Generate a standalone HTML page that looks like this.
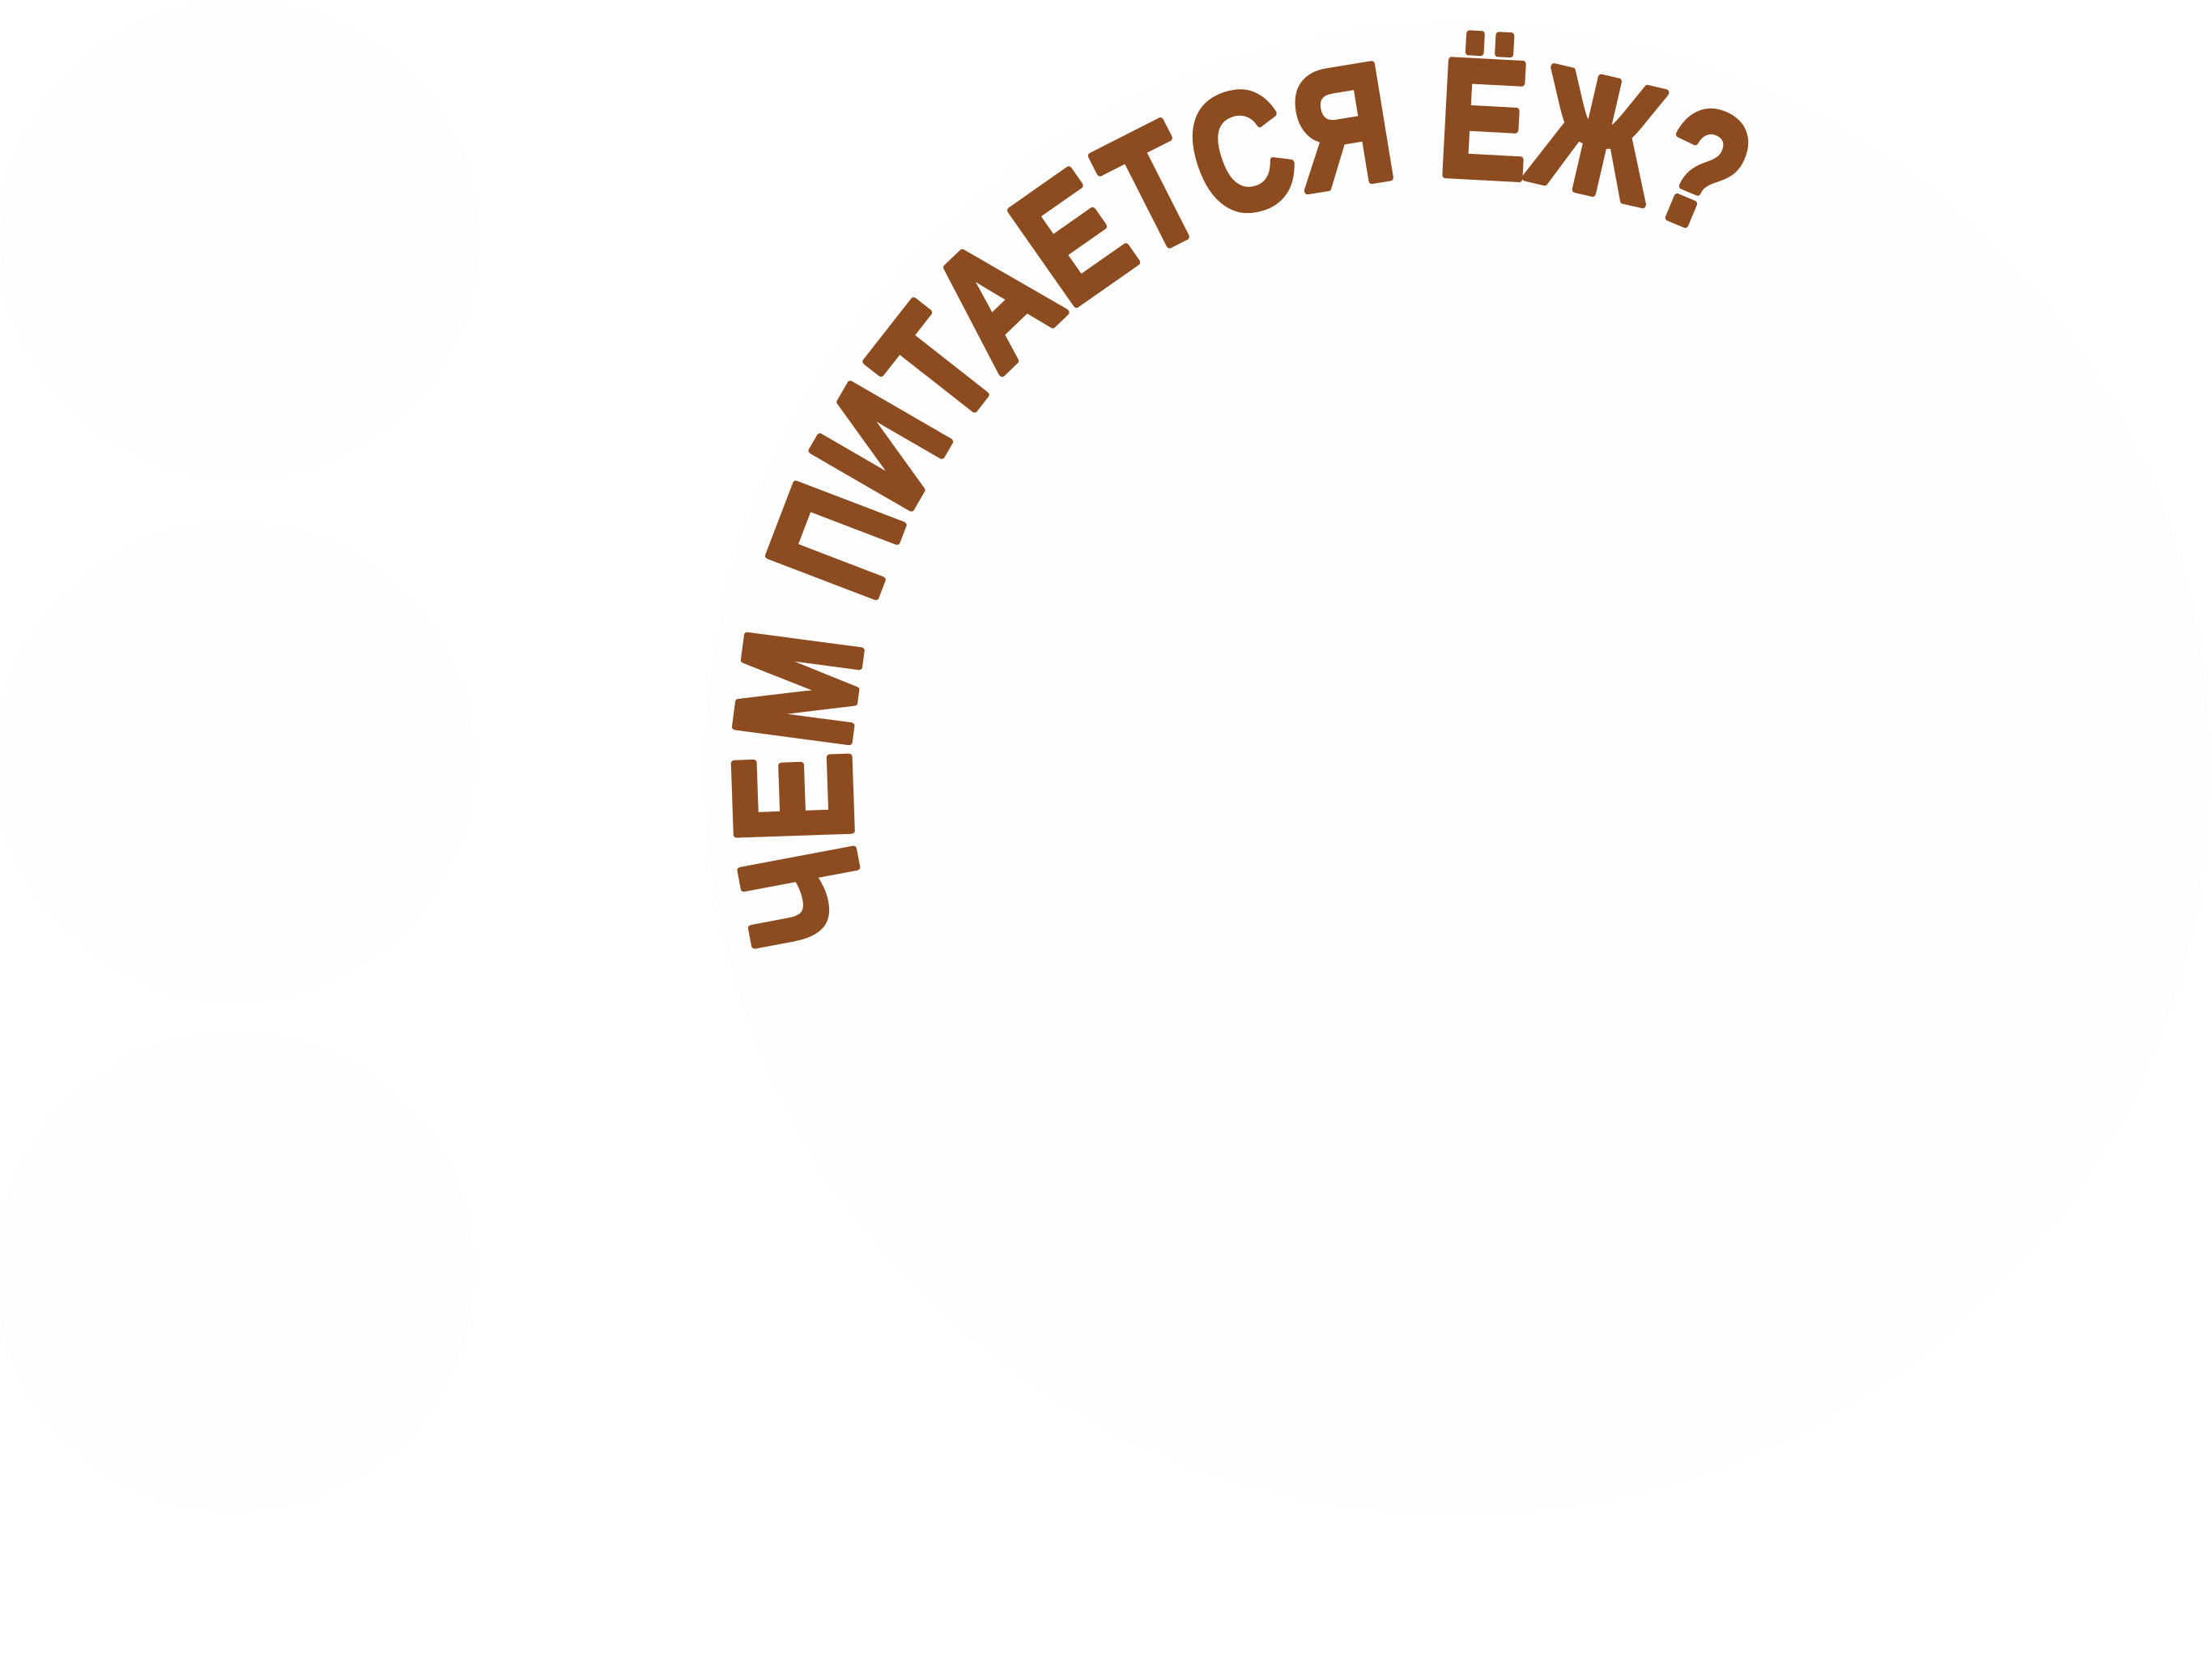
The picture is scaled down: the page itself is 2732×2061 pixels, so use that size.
<!DOCTYPE html>
<html><head><meta charset="utf-8"><style>
html,body{margin:0;padding:0;background:#fff;}
svg{display:block}
</style></head><body>
<svg width="2732" height="2061" viewBox="0 0 2732 2061" xmlns="http://www.w3.org/2000/svg">
<rect width="2732" height="2061" fill="#ffffff"/>
<circle cx="296" cy="296" r="296" fill="#fdfdfd"/>
<circle cx="290" cy="940" r="296" fill="#fdfdfd"/>
<circle cx="290" cy="1570" r="296" fill="#fdfdfd"/>
<ellipse cx="1800" cy="950" rx="930" ry="920" fill="#fdfdfd"/>
<defs>
<path id="arc" d="M 1075 1150 A 740 740 0 0 1 2110 290"/>
</defs>
<text font-family="'Liberation Sans',sans-serif" font-weight="bold" font-size="205" fill="#8d4b20" stroke="#8d4b20" stroke-width="9" stroke-linejoin="round">
<textPath href="#arc" textLength="1700" lengthAdjust="spacingAndGlyphs">ЧЕМ  ПИТАЕТСЯ  ЁЖ?</textPath>
</text>
</svg>
</body></html>
